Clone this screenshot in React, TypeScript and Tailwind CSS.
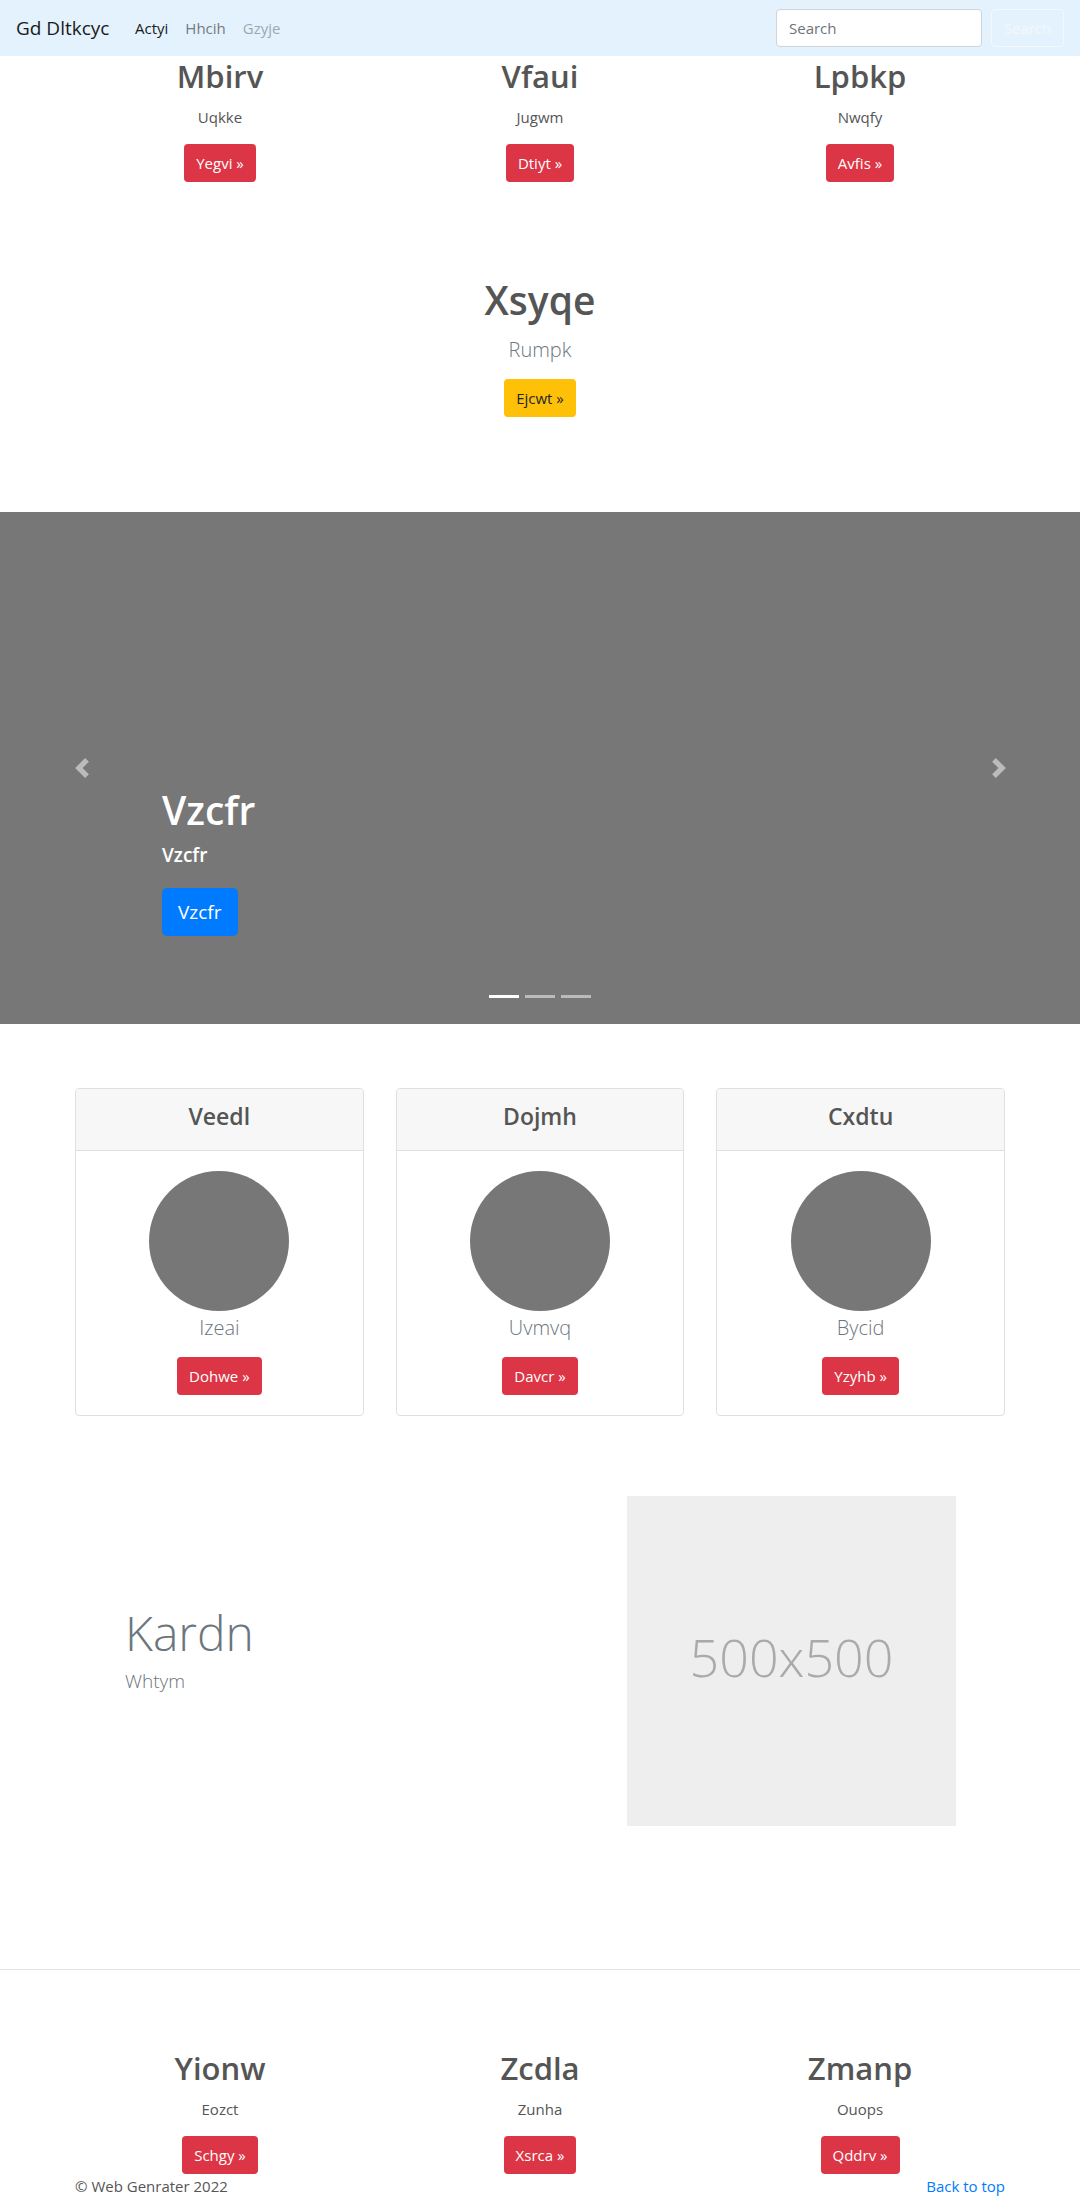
import React from "react";

const F = { fontFamily: '"Open Sans", "Noto Sans", sans-serif' };

function RedBtn({ label }: { label: string }) {
  return (
    <button className="h-[38px] px-[12px] rounded-[4px] bg-[#dc3545] text-white text-[15px] leading-[24px]">
      {label} »
    </button>
  );
}

function Marketing({ items, gapTop }: { items: [string, string, string][]; gapTop: string }) {
  return (
    <div className={`w-[960px] mx-auto grid grid-cols-3 ${gapTop}`}>
      {items.map(([h, p, b]) => (
        <div key={h} className="px-[15px] flex flex-col items-center text-center">
          <h2 className="text-[31px] leading-[38px] font-semibold text-[#555]">{h}</h2>
          <p className="mt-[10px] text-[15px] leading-[24px] text-[#555]">{p}</p>
          <div className="mt-[15px]">
            <RedBtn label={b} />
          </div>
        </div>
      ))}
    </div>
  );
}

function Chevron({ dir }: { dir: "left" | "right" }) {
  return (
    <svg width="20" height="20" viewBox="0 0 8 8" fill="#fff" fillOpacity="0.5">
      {dir === "left" ? (
        <path d="M5.25 0l-4 4 4 4 1.5-1.5-2.5-2.5 2.5-2.5-1.5-1.5z" />
      ) : (
        <path d="M2.75 0l-1.5 1.5 2.5 2.5-2.5 2.5 1.5 1.5 4-4-4-4z" />
      )}
    </svg>
  );
}

const cards: [string, string, string][] = [
  ["Veedl", "Izeai", "Dohwe"],
  ["Dojmh", "Uvmvq", "Davcr"],
  ["Cxdtu", "Bycid", "Yzyhb"],
];

export default function App() {
  return (
    <div style={F} className="bg-white w-[1080px] min-h-[2199px] text-[#555]">
      {/* Navbar */}
      <nav className="h-[56px] bg-[#e3f2fd] flex items-center px-[16px]">
        <div className="w-[119px] text-[19px] text-[#1a1a1a] whitespace-nowrap">Gd Dltkcyc</div>
        <div className="flex gap-[17px] text-[15px]">
          <span className="text-[#1a1a1a]">Actyi</span>
          <span className="text-[#737a80]">Hhcih</span>
          <span className="text-[#a0a8ae]">Gzyje</span>
        </div>
        <div className="ml-auto flex items-center">
          <div className="w-[206px] h-[38px] rounded-[4px] border border-[#ced4da] bg-white flex items-center px-[12px] text-[15px] text-[#6c757d]">
            Search
          </div>
          <button className="ml-[9px] w-[73px] h-[38px] rounded-[4px] border border-[#f3f8fb] text-[#f3f8fb] text-[15px]">
            Search
          </button>
        </div>
      </nav>

      {/* Top marketing */}
      <Marketing
        gapTop="pt-[1px]"
        items={[
          ["Mbirv", "Uqkke", "Yegvi"],
          ["Vfaui", "Jugwm", "Dtiyt"],
          ["Lpbkp", "Nwqfy", "Avfis"],
        ]}
      />

      {/* Xsyqe */}
      <div className="mt-[94px] flex flex-col items-center text-center">
        <h1 className="text-[39px] leading-[48px] font-semibold text-[#555]">Xsyqe</h1>
        <p className="mt-[11px] text-[20px] leading-[30px] font-light text-[#6c757d]">Rumpk</p>
        <button className="mt-[14px] h-[38px] px-[12px] rounded-[4px] bg-[#ffc107] text-[#212529] text-[15px]">
          Ejcwt »
        </button>
      </div>

      {/* Carousel */}
      <div className="mt-[95px] h-[512px] bg-[#777777] relative">
        <div className="flex flex-col items-start pl-[162px] pt-[274px]">
          <h1 className="text-[39px] leading-[48px] font-semibold text-white">Vzcfr</h1>
          <p className="mt-[6px] text-[19px] leading-[30px] font-semibold text-white">Vzcfr</p>
          <button className="mt-[18px] h-[48px] px-[16px] rounded-[5px] bg-[#007bff] text-white text-[19px]">
            Vzcfr
          </button>
        </div>
        <div className="absolute left-[72px] top-[246px]">
          <Chevron dir="left" />
        </div>
        <div className="absolute left-[989px] top-[246px]">
          <Chevron dir="right" />
        </div>
        <div className="absolute left-0 right-0 top-[483px] flex justify-center gap-[6px]">
          <span className="w-[30px] h-[3px] bg-white" />
          <span className="w-[30px] h-[3px] bg-white/50" />
          <span className="w-[30px] h-[3px] bg-white/50" />
        </div>
      </div>

      {/* Cards */}
      <div className="mt-[64px] w-[930px] mx-auto grid grid-cols-3 gap-[32px]">
        {cards.map(([h, p, b]) => (
          <div key={h} className="border border-[#dfdfdf] rounded-[4px] overflow-hidden">
            <div className="h-[62px] bg-[#f7f7f7] border-b border-[#dfdfdf] pt-[13px] text-center">
              <h4 className="text-[23px] leading-[29px] font-semibold text-[#555]">{h}</h4>
            </div>
            <div className="pt-[20px] pb-[20px] flex flex-col items-center">
              <div className="w-[140px] h-[140px] rounded-full bg-[#777777]" />
              <p className="mt-[2px] text-[20px] leading-[30px] font-light text-[#6c757d]">{p}</p>
              <div className="mt-[14px]">
                <RedBtn label={b} />
              </div>
            </div>
          </div>
        ))}
      </div>

      {/* Feature */}
      <div className="mt-[80px] w-[960px] mx-auto flex items-start">
        <div className="w-[567px] pl-[65px] pt-[108px]">
          <h2 className="text-[48px] leading-[58px] font-light text-[#6c757d]">Kardn</h2>
          <p className="mt-[4px] text-[19px] leading-[30px] font-light text-[#6c757d]">Whtym</p>
        </div>
        <div className="w-[329px] h-[330px] bg-[#eeeeee] flex items-center justify-center pb-[8px]">
          <span className="text-[52px] text-[#aaaaaa] font-light">500x500</span>
        </div>
      </div>

      <div className="mt-[143px] border-t border-[#e5e5e5]" />

      {/* Bottom marketing */}
      <Marketing
        gapTop="pt-[79px]"
        items={[
          ["Yionw", "Eozct", "Schgy"],
          ["Zcdla", "Zunha", "Xsrca"],
          ["Zmanp", "Ouops", "Qddrv"],
        ]}
      />

      {/* Footer */}
      <footer className="w-[930px] mx-auto flex justify-between text-[15px] leading-[24px]">
        <span className="text-[#555]">© Web Genrater 2022</span>
        <span className="text-[#007bff]">Back to top</span>
      </footer>
    </div>
  );
}
